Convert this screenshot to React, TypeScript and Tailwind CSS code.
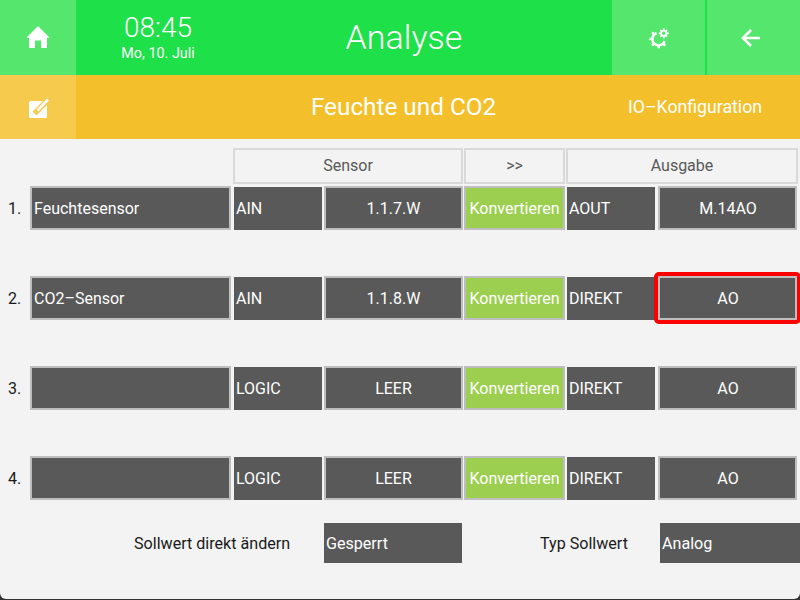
const ROWS = [
  { no: "1.", name: "Feuchtesensor", type: "AIN", source: "1.1.7.W", mode: "AOUT", target: "M.14AO", active: false },
  { no: "2.", name: "CO2–Sensor", type: "AIN", source: "1.1.8.W", mode: "DIREKT", target: "AO", active: true },
  { no: "3.", name: "", type: "LOGIC", source: "LEER", mode: "DIREKT", target: "AO", active: false },
  { no: "4.", name: "", type: "LOGIC", source: "LEER", mode: "DIREKT", target: "AO", active: false },
];

const boxed = "flex h-[44px] items-center border-2 border-[#bebebe] bg-[#595959] pt-[2px] text-white";
const plain = "mt-[1px] flex h-[43px] w-[88px] items-center self-start bg-[#595959] pl-[2px] text-white";

function HomeIcon() {
  return (
    <svg className="mb-[2px]" width="24" height="24" viewBox="0 0 24 24" fill="white">
      <path d="M12 1 L23.5 12.5 L21 13 V23 H15 V15.5 H9 V23 H3 V13 L0.5 12.5 Z" />
    </svg>
  );
}

function EditIcon() {
  return (
    <svg className="mt-[2px] ml-[2px]" width="20" height="20" viewBox="0 0 20 20" fill="none">
      <rect x="0" y="3" width="18" height="17" rx="1.5" fill="white" />
      <path d="M5.5 15.5 L17 4" stroke="#f5ca4d" strokeWidth="5.5" />
      <path d="M8.5 12.5 L19 1.5" stroke="white" strokeWidth="2.6" />
    </svg>
  );
}

function GearsIcon() {
  return (
    <svg width="22" height="22" viewBox="0 0 22 22" fill="none" stroke="white">
      <path d="M8.55 6.08 A6.3 6.3 0 1 0 16.6 14.15" strokeWidth="2.4" />
      <path
        d="M4.4 12 H1.4 M6.25 16.45 L4.1 18.6 M10.7 18.3 V21.3 M15.15 16.45 L17.3 18.6 M6.25 7.55 L4.1 5.4"
        strokeWidth="2.5"
      />
      <circle cx="15.7" cy="6.3" r="2.7" strokeWidth="1.8" />
      <path
        d="M15.7 1.2 V3 M15.7 9.6 V11.4 M10.7 6.3 H12.5 M18.9 6.3 H20.7 M12.3 2.9 L13.4 4 M19.1 2.9 L18 4 M12.3 9.7 L13.4 8.6 M19.1 9.7 L18 8.6"
        strokeWidth="1.7"
      />
    </svg>
  );
}

function BackIcon() {
  return (
    <svg className="mr-[5px]" width="20" height="20" viewBox="0 0 20 20" fill="none" stroke="white" strokeWidth="2.6">
      <path d="M19 10 H2.5 M10 2 L2 10 L10 18" />
    </svg>
  );
}

export default function App() {
  return (
    <div className="h-[600px] w-[800px] overflow-hidden bg-[#333333] font-['Roboto',sans-serif]">
      <div className="flex h-[599px] flex-col rounded-b-[6px] bg-[#f3f3f3]">
        {/* Top bar */}
        <div className="flex h-[75px] bg-[#1ee048] text-white">
          <div className="flex w-[76px] items-center justify-center bg-[#55e66d]">
            <HomeIcon />
          </div>
          <div className="flex w-[164px] flex-col items-center pt-[12px]">
            <div className="text-[28px] leading-[32px] font-light">08:45</div>
            <div className="text-[14.4px] leading-[20px]">Mo, 10. Juli</div>
          </div>
          <div className="flex w-[328px] items-center justify-center text-[34px] font-light">Analyse</div>
          <div className="ml-[44px] flex w-[93px] items-center justify-center bg-[#55e66d]">
            <GearsIcon />
          </div>
          <div className="ml-[2px] flex w-[93px] items-center justify-center bg-[#55e66d]">
            <BackIcon />
          </div>
        </div>

        {/* Sub bar */}
        <div className="flex h-[64px] items-center bg-[#f3c02b] text-white">
          <div className="flex h-full w-[76px] items-center justify-center bg-[#f5ca4d]">
            <EditIcon />
          </div>
          <div className="w-[655px] pt-[1px] text-center text-[24.3px]">Feuchte und CO2</div>
          <div className="w-[0px] -translate-x-[103px] text-[17.7px] whitespace-nowrap">IO–Konfiguration</div>
        </div>

        {/* Column headings */}
        <div className="mt-[9px] ml-[233px] flex h-[36px] gap-[1px] text-[16px] text-[#595959]">
          <div className="flex w-[230px] items-center justify-center border-2 border-[#d9d9d9]">Sensor</div>
          <div className="flex w-[101px] items-center justify-center border-2 border-[#d9d9d9]">&gt;&gt;</div>
          <div className="flex w-[232px] items-center justify-center border-2 border-[#d9d9d9]">Ausgabe</div>
        </div>

        {/* Rows */}
        <div className="mt-[2px] flex flex-col gap-[46px] text-[16px]">
          {ROWS.map((row) => (
            <div key={row.no} className="flex h-[44px] items-center">
              <div className="w-[30px] pt-[2px] pl-[8px] text-[#1a1a1a]">{row.no}</div>
              <div className={`${boxed} w-[201px] pl-[2px]`}>{row.name}</div>
              <div className={`${plain} ml-[3px]`}>{row.type}</div>
              <div className={`${boxed} ml-[2px] w-[139px] justify-center`}>{row.source}</div>
              <div className="ml-[1px] flex h-[44px] w-[101px] items-center justify-center border-2 border-[#bebebe] bg-[#9ccf4f] pt-[2px] text-white">
                Konvertieren
              </div>
              <div className={`${plain} ml-[2px]`}>{row.mode}</div>
              <div
                className={`${boxed} ml-[3px] w-[139px] justify-center pl-[1px] ${row.active ? "rounded-[1px] outline-[4px] outline-[#ff0000]" : ""}`}
              >
                {row.target}
              </div>
            </div>
          ))}
        </div>

        {/* Setpoint options */}
        <div className="mt-[23px] flex h-[40px] items-center text-[16.1px]">
          <div className="ml-[134px] w-[190px] pt-[2px] text-[#1a1a1a]">Sollwert direkt ändern</div>
          <div className="flex h-full w-[138px] items-center bg-[#595959] pt-[2px] pl-[2px] text-white">Gesperrt</div>
          <div className="ml-[78px] w-[120px] pt-[2px] text-[#1a1a1a]">Typ Sollwert</div>
          <div className="flex h-full w-[140px] items-center bg-[#595959] pt-[2px] pl-[2px] text-white">Analog</div>
        </div>
      </div>
    </div>
  );
}
